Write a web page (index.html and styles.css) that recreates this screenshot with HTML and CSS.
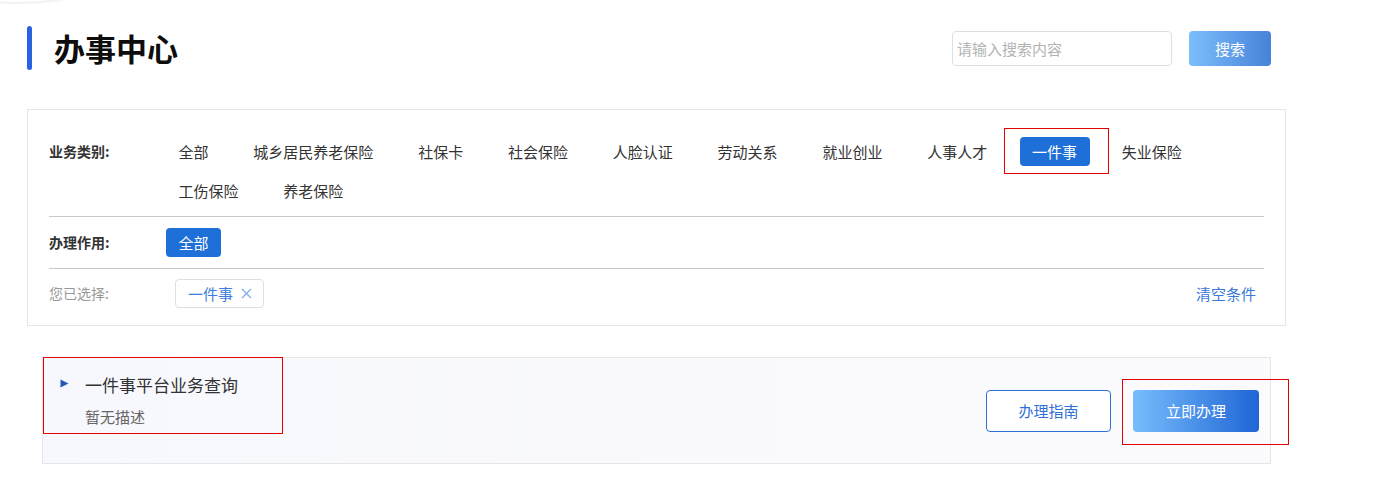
FILE: index.html
```html
<!DOCTYPE html>
<html lang="zh-CN">
<head>
<meta charset="utf-8">
<title>办事中心</title>
<link rel="stylesheet" href="styles.css">
</head>
<body>
<div class="corner-shadow"></div>
<header class="page-head">
  <div class="title-wrap">
    <span class="title-bar"></span>
    <h1 class="title">办事中心</h1>
  </div>
  <div class="search">
    <input class="search-input" type="text" placeholder="请输入搜索内容">
    <button class="search-btn" type="button">搜索</button>
  </div>
</header>

<section class="filter">
  <div class="filter-row first">
    <div class="filter-label">业务类别:</div>
    <div class="filter-items">
      <span class="item">全部</span>
      <span class="item">城乡居民养老保险</span>
      <span class="item">社保卡</span>
      <span class="item">社会保险</span>
      <span class="item">人脸认证</span>
      <span class="item">劳动关系</span>
      <span class="item">就业创业</span>
      <span class="item">人事人才</span>
      <span class="item active marked">一件事</span>
      <span class="item">失业保险</span>
      <span class="item">工伤保险</span>
      <span class="item">养老保险</span>
    </div>
  </div>
  <div class="filter-row">
    <div class="filter-label">办理作用:</div>
    <div class="filter-items">
      <span class="item active">全部</span>
    </div>
  </div>
  <div class="filter-row last">
    <div class="filter-label muted">您已选择:</div>
    <div class="filter-items">
      <span class="tag">一件事<svg class="tag-x" width="11" height="11" viewBox="0 0 11 11"><path d="M1 1L10 10M10 1L1 10" stroke="#86aee9" stroke-width="1.4" fill="none"/></svg></span>
    </div>
    <a class="clear">清空条件</a>
  </div>
</section>

<section class="card">
  <div class="card-mark"></div>
  <div class="card-main">
    <div class="card-title">
      <svg class="tri" width="9" height="9" viewBox="0 0 9 9"><path d="M0.5 0.5L8.5 4.5L0.5 8.5Z" fill="#2457b6"/></svg>
      <span>一件事平台业务查询</span>
    </div>
    <div class="card-desc">暂无描述</div>
  </div>
  <button class="btn-outline" type="button">办理指南</button>
  <button class="btn-primary marked2" type="button">立即办理</button>
</section>
</body>
</html>
```

FILE: styles.css
```css
* { box-sizing: border-box; }
html, body { margin: 0; padding: 0; background: #fff; }
body {
  position: relative;
  font-family: "Noto Sans CJK SC", "Noto Sans", sans-serif;
  color: #333;
}
.corner-shadow {
  position: absolute;
  top: -40px;
  left: -70px;
  width: 170px;
  height: 42px;
  border-radius: 50%;
  background: #fff;
  box-shadow: 0 1px 3px rgba(0,0,0,0.10);
}

/* header */
.page-head {
  display: flex;
  justify-content: space-between;
  align-items: center;
  height: 70px;
  padding: 26px 114px 0 27px;
}
.title-wrap { display: flex; align-items: center; }
.title-bar {
  width: 5px;
  height: 44px;
  border-radius: 3px;
  background: #2a62e3;
  margin-right: 22px;
}
.title {
  margin: 0;
  font-size: 31px;
  font-weight: 700;
  line-height: 44px;
  color: #0d0d0d;
}
.search { display: flex; align-items: center; }
.search-input {
  width: 220px;
  height: 35px;
  border: 1px solid #dcdfe6;
  border-radius: 4px;
  padding: 0 4px;
  font-family: inherit;
  font-size: 15px;
  color: #333;
  outline: none;
}
.search-input::placeholder { color: #b3b3b3; }
.search-btn {
  width: 82px;
  height: 35px;
  margin-left: 17px;
  border: none;
  border-radius: 4px;
  background: linear-gradient(90deg, #7cbefc, #4782d9);
  color: #fff;
  font-family: inherit;
  font-size: 15px;
}

/* filter */
.filter {
  width: 1259px;
  margin: 39px 0 0 27px;
  border: 1px solid #e6e6e6;
  padding: 16px 21px 6px;
}
.filter-row {
  display: flex;
  align-items: flex-start;
  padding: 11px 0;
  border-bottom: 1px solid #c9c9c9;
}
.filter-row.last { border-bottom: none; padding: 10px 0 11px; }
.filter-label {
  width: 117px;
  flex-shrink: 0;
  font-size: 14px;
  font-weight: 700;
  line-height: 29px;
  color: #333;
}
.filter-label.muted { font-weight: 400; color: #999; }
.filter-items {
  display: flex;
  flex-wrap: wrap;
  gap: 10px 19.8px;
  flex: 1;
}
.item {
  position: relative;
  padding: 0 12.5px;
  font-size: 15px;
  line-height: 29px;
  border-radius: 4px;
  color: #333;
  white-space: nowrap;
}
.item.active { background: #1f6fd8; color: #fff; }
.item.marked::after {
  content: "";
  position: absolute;
  top: -9px;
  bottom: -8px;
  left: -16px;
  right: -19px;
  border: 1px solid #e60000;
}
.tag {
  display: inline-flex;
  align-items: center;
  height: 29px;
  margin-left: 9px;
  padding: 0 11px 0 12px;
  border: 1px solid #dcdfe6;
  border-radius: 4px;
  font-size: 15px;
  line-height: 27px;
  color: #3d7ddb;
}
.tag-x { margin-left: 8px; }
.clear {
  margin-left: auto;
  margin-right: 8px;
  font-size: 15px;
  line-height: 29px;
  color: #3a78d8;
  cursor: pointer;
}

/* card */
.card {
  position: relative;
  display: flex;
  align-items: center;
  width: 1229px;
  height: 107px;
  margin: 31px 0 0 42px;
  padding: 0 11px 0 17px;
  background: linear-gradient(90deg, #f7f8fd, #fbfbfd);
  border: 1px solid #e6e6e6;
}
.card-mark {
  position: absolute;
  top: -1px;
  left: 0;
  width: 240px;
  height: 77px;
  border: 1px solid #e60000;
}
.card-main {
  align-self: flex-start;
  margin-top: 15px;
  flex: 1;
}
.card-title {
  display: flex;
  align-items: center;
  font-size: 17px;
  line-height: 24px;
  color: #333;
}
.tri { margin-right: 16px; margin-bottom: 4px; }
.card-desc {
  margin-top: 10px;
  padding-left: 25px;
  font-size: 15px;
  line-height: 20px;
  color: #666;
}
.btn-outline {
  width: 125px;
  height: 42px;
  border: 1px solid #2f6fd6;
  border-radius: 4px;
  background: #fff;
  color: #2f6fd6;
  font-family: inherit;
  font-size: 15px;
}
.btn-primary {
  position: relative;
  width: 126px;
  height: 42px;
  margin-left: 22px;
  border: none;
  border-radius: 4px;
  background: linear-gradient(90deg, #77bdfd, #1f65d5);
  color: #fff;
  font-family: inherit;
  font-size: 15px;
}
.marked2::after {
  content: "";
  position: absolute;
  top: -11px;
  bottom: -13px;
  left: -11px;
  right: -30px;
  border: 1px solid #e60000;
}
```
